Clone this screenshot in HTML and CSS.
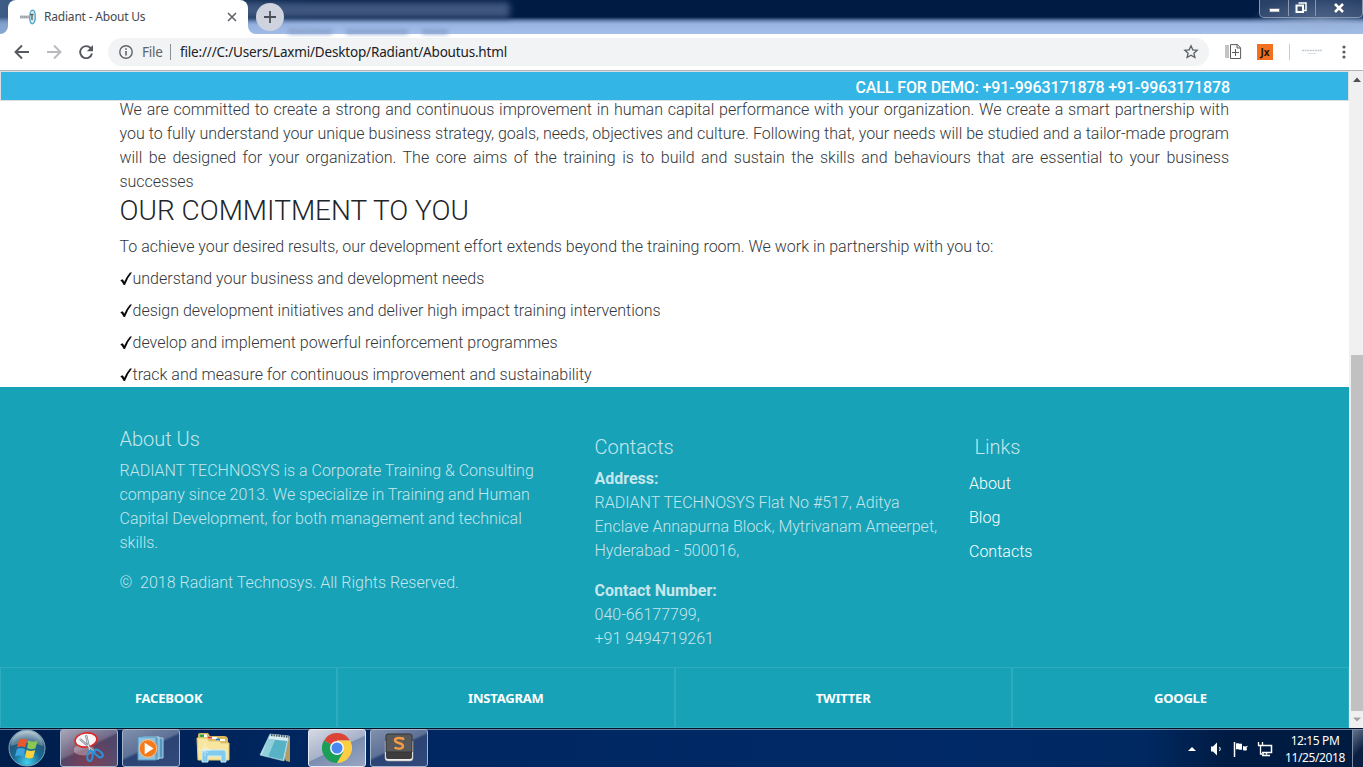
FILE: index.html
```html
<!DOCTYPE html>
<html lang="en">
<head>
<meta charset="utf-8">
<title>Radiant - About Us</title>
<link rel="stylesheet" href="styles.css">
</head>
<body>
<div class="screen">
  <header class="titlebar">
    <div class="ghost ghost-title"></div>
    <div class="ghost ghost-menu"><i></i><i></i><i></i></div>
    <div class="tab">
      <svg class="favicon" width="16" height="16" viewBox="0 0 16 16"><path d="M0 6.500h9v3H0z" fill="#b4b7bc"/><path d="M0 8h8" stroke="#85898f" stroke-dasharray="1 1"/><ellipse cx="12.500" cy="8" rx="2.800" ry="6.800" fill="#dce7ec" stroke="#4ba6c9" stroke-width="1.300"/><path d="M10 5.500h3.500M12 5v6" stroke="#596875" stroke-width="1.400"/></svg>
      <span class="tab-title">Radiant - About Us</span>
      <svg class="tab-close" width="10" height="10" viewBox="0 0 10 10"><path d="M1 1l8 8M9 1L1 9" stroke="#5f6368" stroke-width="1.600"/></svg>
      <svg class="curve left" width="8" height="8"><path d="M8 0v8H0a8 8 0 0 0 8-8" fill="#fff"/></svg>
      <svg class="curve right" width="8" height="8"><path d="M0 0v8h8a8 8 0 0 1-8-8" fill="#fff"/></svg>
    </div>
    <div class="newtab"><svg width="12" height="12"><path d="M6 0v12M0 6h12" stroke="#4b5058" stroke-width="1.800"/></svg></div>
    <div class="winbtns">
      <span class="wb w1"><svg width="11" height="5"><rect x=".5" y=".5" width="10" height="3.500" fill="#fff" stroke="#556077" stroke-width=".7"/></svg></span>
      <span class="wb w2"><svg width="12" height="12"><path d="M3.500 1h7.500v7.500h-2" fill="none" stroke="#fff" stroke-width="1.500"/><rect x="1.500" y="3.500" width="6.500" height="6.500" fill="none" stroke="#fff" stroke-width="2"/></svg></span>
      <span class="wb w3"><svg width="12" height="10"><path d="M2 1l8 8M10 1L2 9" stroke="#39465e" stroke-width="4"/><path d="M2 1l8 8M10 1L2 9" stroke="#fff" stroke-width="2.600"/></svg></span>
    </div>
  </header>

  <div class="toolbar">
    <svg class="nav-icons" width="108" height="36" viewBox="0 0 108 36" fill="none" stroke-width="1.900">
      <path d="M29 18H16M22 11.500L15.500 18l6.500 6.500" stroke="#55595e"/>
      <path d="M47 18h13M54 11.500L60.500 18 54 24.500" stroke="#b8babd"/>
      <path d="M90.700 14.200A6 6 0 1 0 92 19.500" stroke="#55595e"/><path d="M93 11v6.200h-6.200z" fill="#55595e"/>
    </svg>
    <div class="omnibox">
      <svg width="14" height="14" viewBox="0 0 14 14"><circle cx="7" cy="7" r="6.200" fill="none" stroke="#5f6368" stroke-width="1.400"/><path d="M7 6v4.500M7 3.300v1.500" stroke="#5f6368" stroke-width="1.600"/></svg>
      <span class="scheme">File</span><span class="sep"></span>
      <span class="url">file:///C:/Users/Laxmi/Desktop/Radiant/Aboutus.html</span>
      <svg class="star" width="16" height="16" viewBox="0 0 16 16"><path d="M8 1.800l1.800 4 4.400.5-3.300 2.900 1 4.300L8 11.300l-3.900 2.200 1-4.300-3.300-2.900 4.400-.5z" fill="none" stroke="#5b5f64" stroke-width="1.300"/></svg>
    </div>
    <svg class="ext-add" width="17" height="16" viewBox="0 0 17 16" fill="none" stroke="#5c5c5c"><path d="M1 1v13M3 1v13" stroke="#888"/><path d="M5.500.6h7L15.600 4v10.500H5.500zM12 .6V4h3.500M10.500 5v7M7 8.500h7"/></svg>
    <div class="jx">Jx</div>
    <span class="tsep"></span>
    <svg class="avatar" width="20" height="8"><path d="M0 2.500h20" stroke="#c4cbd1" stroke-width="1.500" stroke-dasharray="2 .6"/><path d="M6 5.500h8" stroke="#d9e0e3"/></svg>
    <svg class="dots" width="4" height="14"><circle cx="2" cy="2" r="1.600"/><circle cx="2" cy="7" r="1.600"/><circle cx="2" cy="12" r="1.600"/></svg>
  </div>

  <div class="viewport">
    <main class="page">
      <div class="callbar">CALL FOR DEMO: +91-9963171878 +91-9963171878</div>
      <section class="content">
        <p class="intro">We are committed to create a strong and continuous improvement in human capital performance with your organization. We create a smart partnership with you to fully understand your unique business strategy, goals, needs, objectives and culture. Following that, your needs will be studied and a tailor-made program will be designed for your organization. The core aims of the training is to build and sustain the skills and behaviours that are essential to your business successes</p>
        <h2>OUR COMMITMENT TO YOU</h2>
        <p>To achieve your desired results, our development effort extends beyond the training room. We work in partnership with you to:</p>
        <p><svg class="check" viewBox="0 0 13 14"><path d="M.3 8.300l2.400-1.100q1 1.200 1.500 2.600Q6.500 4.500 10 .5l2 .1Q7.500 6 5 13H3.700Q2.300 10 .3 8.300z"/></svg>understand your business and development needs</p>
        <p><svg class="check" viewBox="0 0 13 14"><path d="M.3 8.300l2.400-1.100q1 1.200 1.500 2.600Q6.500 4.500 10 .5l2 .1Q7.500 6 5 13H3.700Q2.300 10 .3 8.300z"/></svg>design development initiatives and deliver high impact training interventions</p>
        <p><svg class="check" viewBox="0 0 13 14"><path d="M.3 8.300l2.400-1.100q1 1.200 1.500 2.600Q6.500 4.500 10 .5l2 .1Q7.500 6 5 13H3.700Q2.300 10 .3 8.300z"/></svg>develop and implement powerful reinforcement programmes</p>
        <p><svg class="check" viewBox="0 0 13 14"><path d="M.3 8.300l2.400-1.100q1 1.200 1.500 2.600Q6.500 4.500 10 .5l2 .1Q7.500 6 5 13H3.700Q2.300 10 .3 8.300z"/></svg>track and measure for continuous improvement and sustainability</p>
      </section>
      <footer class="footer">
        <div class="cols">
          <div class="about">
            <h5>About Us</h5>
            <p>RADIANT TECHNOSYS is a Corporate Training &amp; Consulting company since 2013. We specialize in Training and Human Capital Development, for both management and technical skills.</p>
            <p>©&nbsp; 2018 Radiant Technosys. All Rights Reserved.</p>
          </div>
          <div class="contacts">
            <h5>Contacts</h5>
            <p><b>Address:</b><br>RADIANT TECHNOSYS Flat No #517, Aditya Enclave Annapurna Block, Mytrivanam Ameerpet, Hyderabad - 500016,</p>
            <p><b>Contact Number:</b><br>040-66177799,<br>+91 9494719261</p>
          </div>
          <div class="links">
            <h5>Links</h5>
            <a>About</a><a>Blog</a><a>Contacts</a>
          </div>
        </div>
        <div class="social"><a>FACEBOOK</a><a>INSTAGRAM</a><a>TWITTER</a><a>GOOGLE</a></div>
      </footer>
    </main>
    <div class="scrollbar">
      <svg class="sb-arrow" width="13" height="17"><path d="M4 11l4-4.500L12 11z" fill="#505050"/></svg>
      <div class="track"><div class="thumb"></div></div>
      <svg class="sb-arrow" width="13" height="17"><path d="M4 6.500h8L8 10.500z" fill="#a3a3a3"/></svg>
    </div>
  </div>

  <div class="taskbar">
    <div class="start">
      <svg width="40" height="38" viewBox="0 0 40 38">
        <defs><radialGradient id="orb" cx=".5" cy=".9" r=".85"><stop offset="0" stop-color="#43d1ee"/><stop offset=".45" stop-color="#176a94"/><stop offset=".75" stop-color="#25587a"/><stop offset="1" stop-color="#9bb3c1"/></radialGradient></defs>
        <circle cx="20" cy="19" r="18" fill="url(#orb)" stroke="#7fa5ba"/>
        <path d="M4 17a16 15 0 0 1 32 0c-10-4-22-4-32 0z" fill="#fff" opacity=".25"/>
        <path d="M12 11q4-2.500 8 0l-1.600 7.500q-4-2-8.400.2z" fill="#e9572b"/>
        <path d="M21.500 11.500q4 2.500 9 .2l-2 7.500q-4.500 2-8.500-.3z" fill="#8cc751"/>
        <path d="M9.800 20.200q4-2.300 8.300 0l-1.800 7.500q-4-2.400-8.300-.3z" fill="#3fa4dc"/>
        <path d="M19.700 20.800q4 2.300 8.500.2l-2 7.500q-4.300 2-8.300-.2z" fill="#f8d13d"/>
      </svg>
    </div>
    <div class="task red"><svg width="34" height="34" viewBox="0 0 34 34"><ellipse cx="12" cy="19" rx="11" ry="6" fill="#fff" opacity=".3" stroke="#a33"/><ellipse cx="14" cy="9" rx="11" ry="7" fill="#f6f6f8" stroke="#db2828" stroke-width="1.600" transform="rotate(-8 14 9)"/><path d="M8 8l15 13M14 4l4 17" stroke="#777d86" stroke-width="2.300"/><path d="M8 8l15 13M14 4l4 17" stroke="#e5e9ed" stroke-width=".9"/><ellipse cx="18" cy="25" rx="2.600" ry="5" fill="none" stroke="#2b91d9" stroke-width="2" transform="rotate(8 18 25)"/><ellipse cx="26.500" cy="22.500" rx="2.600" ry="5" fill="none" stroke="#2b91d9" stroke-width="2" transform="rotate(-50 26.500 22.500)"/></svg></div>
    <div class="task"><svg width="30" height="30" viewBox="0 0 30 30"><path d="M10 5h17v20H10z" fill="#5a93bb" stroke="#a8d2e8"/><path d="M7 4h16v22H7z" fill="#6fa9cd" stroke="#b8dff0"/><path d="M2 4h18v23H2z" fill="#8dc4e2" stroke="#5694bb"/><circle cx="12" cy="15.500" r="8.800" fill="#f47a1c" stroke="#ffc08a"/><path d="M8.700 9.800l8.800 5.700-8.800 5.700z" fill="#fff"/></svg></div>
    <div class="task plain"><svg width="34" height="32" viewBox="0 0 34 32"><path d="M2 3q0-2 2-2h8l2 3h14q4 0 4 4v20H2z" fill="#d9b95d"/><path d="M4 2.500h7v2.500H4z" fill="#fff"/><path d="M4 2.500h4v2.500H4z" fill="#28a34a"/><path d="M12 5h9v2h-9z" fill="#fff"/><path d="M12 4.700h4v2h-4z" fill="#d4493c"/><path d="M20 7h9v2h-9z" fill="#fff"/><path d="M20 6.700h4v2h-4z" fill="#2779cc"/><path d="M1 6h10l2 3h10l2 2h8v17H2z" fill="#f7e5a0" stroke="#e4c770"/><path d="M6 30V20q0-2 2-2h19q3 0 3 3v9h-5v-6H12v6z" fill="#83cbed" stroke="#c6eefc"/><path d="M9 11v13M3 18h12M6 15l6 6M6 21l6-6" stroke="#fff" opacity=".5"/></svg></div>
    <div class="task plain"><svg width="34" height="32" viewBox="0 0 34 32"><path d="M14 2l18 2v26l-4-1z" fill="#b79b62"/><path d="M12 2l19 2-5 25L2 23z" fill="#d5edf1" stroke="#8ebac4" stroke-width=".7"/><path d="M10 7l19 2-4 19L4 23z" fill="#57b2c5"/><path d="M10 7L2 23l8 2 7-17z" fill="#aadce4" opacity=".7"/><path d="M13 3l18 2" stroke="#4c5c63" stroke-width="2" stroke-dasharray="1.500 1"/></svg></div>
    <div class="task active"><svg width="30" height="30" viewBox="0 0 30 30"><path d="M15 15L2 7.500A15 15 0 0 1 28 7.500H15z" fill="#dc4437"/><path d="M15 15L2 7.500A15 15 0 0 0 15 30l6.500-11z" fill="#1b9f58"/><path d="M15 7.500h13A15 15 0 0 1 15 30l6.500-11.200z" fill="#fdce43"/><circle cx="15" cy="15" r="7" fill="#f3f6fb"/><circle cx="15" cy="15" r="5.500" fill="#4787f0"/></svg></div>
    <div class="task"><svg width="32" height="30" viewBox="0 0 32 30"><path d="M2 8h28v17q0 3-3 3H5q-3 0-3-3z" fill="#f0f0f0" stroke="#aaa" stroke-width=".6"/><path d="M5 1h22q2 0 2 2v21q0 2-2 2H5q-2 0-2-2V3q0-2 2-2z" fill="#3d3d3e"/><path d="M5 1h22q2 0 2 2v16H3V3q0-2 2-2z" fill="#57585a" stroke="#343434"/><path d="M20.500 7L20 5.500Q12 4 12 7.500c0 3 8 2 8 5.500 0 3.200-5 3.200-8.500 1.500" fill="none" stroke="#f49c45" stroke-width="2.400"/></svg></div>
    <div class="tray">
      <svg width="8" height="4"><path d="M0 4l4-4 4 4z" fill="#fff"/></svg>
      <svg width="14" height="14" viewBox="0 0 14 14"><path d="M1 4.500h2L7 .5v13l-4-4H1z" fill="#fff"/><path d="M9.500 5q1.500 2 0 4" fill="none" stroke="#fff"/></svg>
      <svg width="15" height="15" viewBox="0 0 15 15"><path d="M1.500 0v15" stroke="#fff" stroke-width="1.500"/><path d="M3 1.500c3-1 3 1 6 0v6c-3 1-3-1-6 0zM10 4q2 1 5-.2L13.500 6l.5 2q-2 1-4 0z" fill="#fff"/></svg>
      <svg width="16" height="15" viewBox="0 0 16 15" fill="none" stroke="#fff"><path d="M6 3.500h8.500v7H5M9.500 10.500v2M5 13.500h8" stroke-width="1.500"/><path d="M1.500 0v3.500h4V0M3.500 3.500v8.500H7" stroke-width="1.300"/></svg>
    </div>
    <div class="clock"><span>12:15 PM</span><span>11/25/2018</span></div>
    <div class="peek"></div>
  </div>
</div>
</body>
</html>
```
FILE: styles.css
```css
* { box-sizing: border-box; }
body { margin: 0; overflow: hidden; background: #fff; }
svg { display: block; flex: none; }
.screen { width: 1363px; height: 767px; display: flex; flex-direction: column; overflow: hidden; }

.titlebar {
  position: relative; height: 34px; flex: none; display: flex; padding-left: 8px;
  background:
    radial-gradient(ellipse 70px 22px at 1320px 19px, rgba(150,175,210,.6), transparent),
    linear-gradient(90deg, rgba(110,145,190,.55) 0, transparent 320px),
    linear-gradient(#001b43 0, #001b43 17px, #6f8bb8 21px, #99b4e2 24px, #a5bfea 34px);
}
.ghost { position: absolute; filter: blur(3px); }
.ghost-title { left: 230px; top: 2px; width: 280px; height: 16px; background: #3f567e; border-radius: 4px; }
.ghost-menu { left: 288px; top: 29px; display: flex; gap: 14px; filter: blur(2px); }
.ghost-menu i { width: 44px; height: 5px; background: #8aa2cd; }
.ghost-menu i:nth-child(2) { width: 62px; }
.ghost-menu i:nth-child(3) { width: 26px; }
.tab { position: relative; width: 240px; height: 34px; background: #fff; border-radius: 8px 8px 0 0; display: flex; align-items: center; padding: 0 11px 0 12px; }
.tab-title { margin-left: 8px; flex: 1; font: 12px/16px "Noto Sans", sans-serif; letter-spacing: -.2px; color: #45494d; white-space: nowrap; }
.curve { position: absolute; bottom: 0; }
.curve.left { left: -8px; }
.curve.right { right: -8px; }
.newtab { position: relative; margin: 3px 0 0 8px; width: 28px; height: 28px; border-radius: 50%; background: #ced3dd; display: flex; align-items: center; justify-content: center; }
.winbtns { position: relative; margin-left: auto; width: 104px; height: 18px; display: flex; border: 1px solid #8898b2; border-top: 0; border-radius: 0 0 5px 5px; background: linear-gradient(rgba(80,101,137,.5), rgba(70,90,125,.7)); }
.wb { display: flex; align-items: center; justify-content: center; height: 16px; }
.wb + .wb { border-left: 1px solid #8898b2; }
.w1 { width: 28px; }
.w1 svg { margin-top: 4px; }
.w2 { width: 27px; padding-right: 2px; }
.w3 { flex: 1; }

.toolbar { height: 37px; flex: none; display: flex; align-items: center; background: #fff; border-bottom: 1px solid #b3b4b7; }
.nav-icons { margin-bottom: 1px; }
.omnibox { width: 1101px; height: 28px; border-radius: 14px; background: #f1f3f4; display: flex; align-items: center; padding: 0 10px 0 11px; font: 14px/20px "Noto Sans", sans-serif; white-space: nowrap; }
.scheme { margin-left: 9px; width: 21px; font-size: 13.500px; letter-spacing: -.2px; color: #5f6368; }
.sep { width: 1px; height: 16px; background: #8d9195; margin: 0 9px 0 7px; }
.url { flex: 1; font-size: 13.500px; letter-spacing: -.18px; color: #202124; }
.ext-add { margin-left: 16px; }
.jx { margin-left: 15px; width: 16px; height: 16px; background: #f37021; color: #20150f; font: bold 10px/16px "Open Sans", sans-serif; text-align: center; }
.tsep { margin-left: 16px; width: 1px; height: 16px; background: #c8cacc; }
.avatar { margin-left: 12px; }
.dots { margin-left: 20px; fill: #5b5f64; }

.viewport { height: 657px; flex: none; display: flex; }
.page { position: relative; width: 1349px; height: 657px; overflow: hidden; font: 300 16px/24px Roboto, sans-serif; color: #212529; }
.callbar { position: absolute; left: 0; top: 0; width: 1349px; height: 30px; padding: 4px 118px 0 0; text-align: right; color: #fff; background: #33b5e5; border: 1px solid #d9dfe3; font-weight: 500; letter-spacing: -.12px; }
p, h2, h5 { margin: 0; font-weight: 300; }
.content { padding: 27px 120px 0 119.500px; height: 316px; }
.content p { margin-bottom: 8px; color: #33373b; }
.content .intro { text-align: justify; margin: 0; letter-spacing: -.02px; }
h2 { font-size: 28px; line-height: 33.600px; margin-bottom: 7px; }
.check { display: inline-block; width: 13px; height: 14px; vertical-align: -2px; fill: #0b0b0d; }
.footer { height: 341px; background: #17a2b8; color: rgba(255,255,255,.75); display: flex; flex-direction: column; }
.cols { height: 280px; display: grid; grid-template-columns: 475px 374.500px 1fr; padding: 0 120px 0 119.500px; }
.cols h5 { font-size: 20px; margin-bottom: 8px; }
.cols p { margin-bottom: 16px; }
.about { padding: 40px 50px 0 0; }
.contacts { padding: 48px 25px 0 0; }
.links { padding-top: 48px; display: flex; flex-direction: column; }
.cols .links h5 { margin: 0 0 13px 5.500px; }
.links a { color: #fff; margin-bottom: 10px; }
b { font-weight: 700; }
.social { height: 61px; display: grid; grid-template-columns: repeat(4, 1fr); }
.social a { border: 1px solid rgba(255,255,255,.1); display: flex; align-items: center; justify-content: center; padding-top: 1px; color: #fff; font: bold 13px/20px "Noto Sans", sans-serif; letter-spacing: -.2px; }

.scrollbar { width: 14px; background: #f0f0f0; display: flex; flex-direction: column; }
.track { flex: 1; display: flex; flex-direction: column; justify-content: flex-end; padding-left: 2px; }
.thumb { height: 356px; background: #c1c1c1; }

.taskbar { height: 39px; flex: none; display: flex; border-top: 1px solid #061125; box-shadow: inset 0 1px #6380a4; background: linear-gradient(90deg, #001e4b, #00265f 20%, #002a67 70%, #002961 84%, #001b43 90%, #001b40); }
.start { width: 60px; padding-left: 7px; }
.task { width: 58px; height: 38px; margin-right: 4px; border: 1px solid #a6b4c9; border-radius: 3px; display: flex; align-items: center; justify-content: center; background: linear-gradient(155deg, #8190ad 0, #5e7196 45%, #2c4474 50%, #314a7b 100%); }
.task.red { background: radial-gradient(ellipse at 50% 100%, rgba(170,50,60,.5), transparent 75%), linear-gradient(155deg, #a9a6b7 0, #706d8c 45%, #4d4669 50%, #554f72); }
.task.plain { border: 0; background: none; }
.task.active { border-color: #e7ebf1; background: linear-gradient(155deg, #d4d9e4 0, #a7b2c9 50%, #7b8db0 52%, #98a6c2); }
.tray { margin-left: auto; display: flex; align-items: center; gap: 9px; padding-top: 2px; }
.tray svg:first-child { margin-right: 5px; }
.clock { width: 77px; display: flex; flex-direction: column; align-items: center; padding: 3px 0 0 3px; color: #fff; font: 12px/17px "Noto Sans", sans-serif; letter-spacing: -.4px; margin-left: 2px; }
.peek { width: 11px; border: 1px solid #7d8da7; border-width: 1px 0 0 1px; background: linear-gradient(135deg, #66758c, #0b1f42 60%); }
```
